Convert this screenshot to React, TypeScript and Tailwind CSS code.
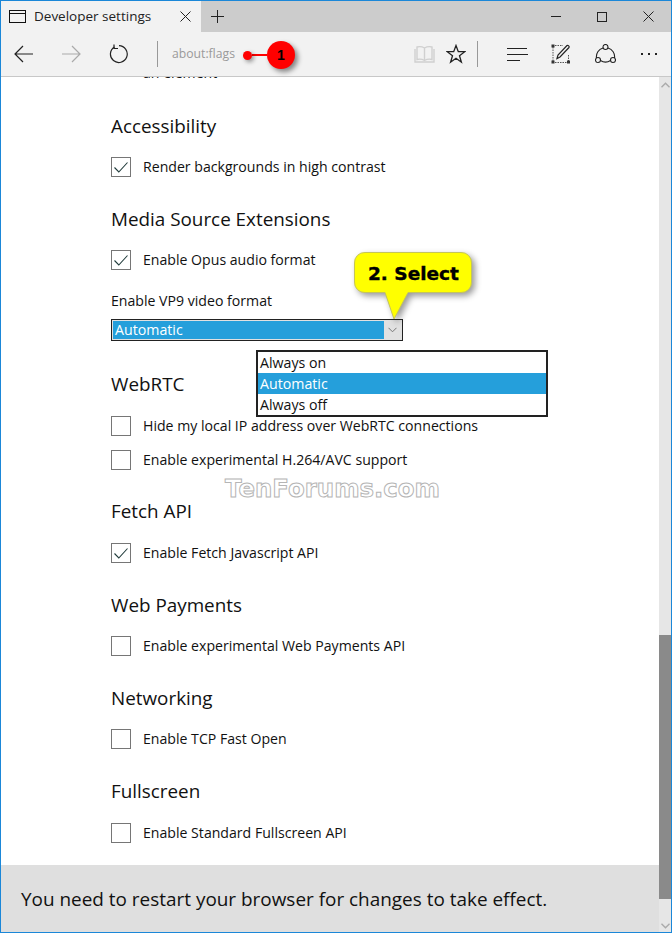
import React from 'react';

const font = "font-['Open_Sans','Noto_Sans',sans-serif]";

// --- toolbar icons ---
const PageIcon = () => (
  <svg width="18" height="14" viewBox="0 0 18 14" fill="none" stroke="#111" strokeWidth="1">
    <rect x="0.5" y="0.5" width="16" height="12" />
    <path d="M0.5 3.5H16.5" />
  </svg>
);

const Close = ({ size = 11, color = '#222' }: { size?: number; color?: string }) => (
  <svg width={size} height={size} viewBox="0 0 11 11" fill="none" stroke={color} strokeWidth="1">
    <path d="M0.5 0.5L10.5 10.5M10.5 0.5L0.5 10.5" />
  </svg>
);

const Arrow = ({ color, flip }: { color: string; flip?: boolean }) => (
  <svg width="19" height="18" viewBox="0 0 19 18" fill="none" stroke={color} strokeWidth="1.2" className={flip ? 'rotate-180' : ''}>
    <path d="M1 9H19M9 1L1 9L9 17" />
  </svg>
);

const Refresh = () => (
  <svg width="20" height="20" viewBox="0 0 20 20" fill="none" stroke="#222" strokeWidth="1.2">
    <path d="M6.5 2.9A8.4 8.4 0 1 0 11 1.7" />
    <path d="M6 0.5V4.5H10" />
  </svg>
);

const Book = () => (
  <svg width="21" height="18" viewBox="0 0 21 18" fill="none" stroke="#d0d0d0" strokeWidth="1.4">
    <path d="M10.5 3C8 1.500 5 1.500 3 2V14.500C5 14 8 14 10.500 15.500C13 14 16 14 18 14.500V2C16 1.500 13 1.500 10.500 3ZM10.500 3V15.500" />
    <path d="M1 4V17H20V4" />
  </svg>
);

const Star = () => (
  <svg width="20" height="20" viewBox="0 0 20 20" fill="none" stroke="#222" strokeWidth="1.3">
    <path d="M10 1.500L12.300 7.700H18.800L13.500 11.700L15.400 18.200L10 14.300L4.600 18.200L6.500 11.700L1.200 7.700H7.700Z" />
  </svg>
);

const Hub = () => (
  <svg width="21" height="15" viewBox="0 0 21 15" fill="none" stroke="#222" strokeWidth="1.2">
    <path d="M0 1.500H20M0 7.500H21M0 13.500H13" />
  </svg>
);

const Note = () => (
  <svg width="20" height="20" viewBox="0 0 20 20" fill="none">
    <path d="M2 3V17M4 18.500H16M4 1.500H12" stroke="#555" strokeWidth="1" strokeDasharray="1.500 1" />
    <path d="M17.500 11V17" stroke="#555" strokeWidth="1" strokeDasharray="1.500 1" />
    <rect x="0.500" y="0.500" width="3" height="3" fill="#333" />
    <rect x="0.500" y="16.500" width="3" height="3" fill="#333" />
    <rect x="16" y="16.500" width="3" height="3" fill="#333" />
    <path d="M6 14.500L7 11L16 1.500C17 0.800 18.800 2.500 18 3.500L9 13Z" stroke="#222" strokeWidth="1.200" />
  </svg>
);

const Share = () => (
  <svg width="21" height="20" viewBox="0 0 21 20" fill="none" stroke="#222" strokeWidth="1.100">
    <circle cx="10.500" cy="3" r="2.500" />
    <circle cx="3" cy="16" r="2.500" />
    <circle cx="18" cy="16" r="2.500" />
    <path d="M8 4A9 9 0 0 0 1.500 14M13 4A9 9 0 0 1 19.500 14M5.500 16.500A9 9 0 0 0 15.500 16.500" />
  </svg>
);

const Check = () => (
  <svg width="14" height="11" viewBox="0 0 14 11" fill="none" stroke="#1f3a3a" strokeWidth="1.100">
    <path d="M0.500 5.500L4.800 10L13.500 0.500" />
  </svg>
);

const Chevron = ({ color, up, thin }: { color: string; up?: boolean; thin?: boolean }) => (
  <svg width="9" height="6" viewBox="0 0 9 6" fill="none" stroke={color} strokeWidth={thin ? 1 : 1.4} className={up ? 'rotate-180' : ''}>
    <path d="M0.500 0.800L4.500 4.800L8.500 0.800" />
  </svg>
);

// --- content helpers ---
const Heading: React.FC<{ className?: string; children: React.ReactNode }> = ({ className = '', children }) => (
  <h2 className={`h-[40px] flex items-center text-[18.850px] text-[#111] font-normal ${className}`}>{children}</h2>
);

const CheckRow: React.FC<{ label: string; checked?: boolean; className?: string }> = ({ label, checked, className = '' }) => (
  <div className={`h-[34px] flex items-center ${className}`}>
    <div className="w-[20px] h-[20px] border border-[#767676] flex items-center justify-center shrink-0">
      {checked && <Check />}
    </div>
    <span className="ml-[12px] text-[14.120px] text-[#111]">{label}</span>
  </div>
);

export default function App() {
  return (
    <div className={`relative w-[672px] h-[933px] border border-[#1b87d8] flex flex-col bg-white overflow-hidden ${font}`}>
      {/* タブバー */}
      <div className="h-[31px] flex bg-[#cccccc] shrink-0">
        <div className="w-[200px] bg-[#f2f2f2] flex items-center pl-[8px] pr-[10px]">
          <PageIcon />
          <span className="ml-[7px] text-[13.500px] text-[#222]">Developer settings</span>
          <span className="ml-auto"><Close /></span>
        </div>
        <div className="w-[32px] flex items-center justify-center text-[#222]">
          <svg width="13" height="13" viewBox="0 0 13 13" stroke="#222" strokeWidth="1"><path d="M6.500 0V13M0 6.500H13" /></svg>
        </div>
        <div className="ml-auto flex items-center pr-[17px] gap-[36px]">
          <div className="w-[10px] h-px bg-[#222]" />
          <div className="w-[10px] h-[10px] border border-[#222]" />
          <Close />
        </div>
      </div>

      {/* ツールバー */}
      <div className="h-[45px] flex items-center bg-[#f2f2f2] border-b border-[#c8c8c8] shrink-0">
        <div className="ml-[13px] flex"><Arrow color="#222" /></div>
        <div className="ml-[29px] flex"><Arrow color="#aaa" flip /></div>
        <div className="ml-[27px] flex"><Refresh /></div>
        <div className="ml-[29px] w-px h-[26px] bg-[#999]" />
        <span className="ml-[14px] text-[12.200px] text-[#9a9a9a]">about:flags</span>
        <div className="ml-[179px] flex"><Book /></div>
        <div className="ml-[11px] flex"><Star /></div>
        <div className="ml-[11px] w-px h-[26px] bg-[#999]" />
        <div className="ml-[29px] flex"><Hub /></div>
        <div className="ml-[23px] flex"><Note /></div>
        <div className="ml-[24px] flex"><Share /></div>
        <div className="ml-[25px] flex gap-[5px]">
          <div className="w-[2px] h-[2px] bg-[#222]" />
          <div className="w-[2px] h-[2px] bg-[#222]" />
          <div className="w-[2px] h-[2px] bg-[#222]" />
        </div>
      </div>

      <div className="flex-1 flex min-h-0">
        <div className="flex-1 flex flex-col min-w-0">
          {/* 設定リスト */}
          <div className="flex-1 overflow-hidden pl-[110px]">
            <div className="-mt-[21px] h-[34px] flex items-center pl-[32px] text-[14.120px] text-[#111]">an element</div>
            <Heading className="mt-[16px]">Accessibility</Heading>
            <CheckRow className="mt-[4px]" label="Render backgrounds in high contrast" checked />
            <Heading className="mt-[15px]">Media Source Extensions</Heading>
            <CheckRow className="mt-[4px]" label="Enable Opus audio format" checked />
            <div className="mt-[12px] h-[24px] flex items-center text-[14.120px] text-[#111]">Enable VP9 video format</div>
            <div className="mt-[6px] w-[292px] h-[22px] border border-[#222] bg-[#e1e1e1] flex p-px">
              <div className="flex-1 bg-[#259fdb] text-white text-[14.200px] leading-[18px] pl-[2px]">Automatic</div>
              <div className="w-[17px] flex items-center justify-center"><Chevron color="#777" thin /></div>
            </div>
            <Heading className="mt-[23px]">WebRTC</Heading>
            <CheckRow className="mt-[5px]" label="Hide my local IP address over WebRTC connections" />
            <CheckRow label="Enable experimental H.264/AVC support" />
            <Heading className="mt-[14px]">Fetch API</Heading>
            <CheckRow className="mt-[5px]" label="Enable Fetch Javascript API" checked />
            <Heading className="mt-[15px]">Web Payments</Heading>
            <CheckRow className="mt-[4px]" label="Enable experimental Web Payments API" />
            <Heading className="mt-[15px]">Networking</Heading>
            <CheckRow className="mt-[4px]" label="Enable TCP Fast Open" />
            <Heading className="mt-[15px]">Fullscreen</Heading>
            <CheckRow className="mt-[5px]" label="Enable Standard Fullscreen API" />
          </div>
          {/* 再起動の通知 */}
          <div className="h-[67px] bg-[#dfdfdf] flex items-center pl-[20px] pt-[2px] text-[18.930px] text-[#111] shrink-0">
            You need to restart your browser for changes to take effect.
          </div>
        </div>

        {/* スクロールバー */}
        <div className="w-[12px] bg-[#e6e6e6] flex flex-col items-center shrink-0">
          <div className="h-[12px] flex items-center pt-[4px]"><Chevron color="#aaa" up /></div>
          <div className="mt-[546px] h-[264px] w-full bg-[#8a8a8a]" />
          <div className="mt-auto h-[12px] flex items-center"><Chevron color="#aaa" /></div>
        </div>
      </div>

      {/* 注釈 1 */}
      <div className="absolute left-[242px] top-[40px] flex items-center">
        <div className="w-[9px] h-[9px] rounded-full bg-[#ff0000] drop-shadow-[2px_2px_2px_rgba(0,0,0,0.4)]" />
        <div className="w-[15px] h-[2px] bg-[#ff0000]" />
        <div className="w-[28px] h-[28px] rounded-full bg-[#ff0000] flex items-center justify-center text-black text-[14px] font-bold shadow-[3px_3px_5px_rgba(0,0,0,0.45)] font-['Liberation_Sans',sans-serif]">1</div>
      </div>

      {/* 注釈 2 */}
      <div className="absolute left-[351px] top-[249px] w-[124px] h-[72px]">
        <svg width="124" height="72" viewBox="0 0 124 72" className="drop-shadow-[3px_3px_3px_rgba(0,0,0,0.4)]">
          <path d="M13 2.500H109A10 10 0 0 1 119.500 13V32A10 10 0 0 1 109 42.500H56L42 69L33 42.500H13A10 10 0 0 1 2.500 32V13A10 10 0 0 1 13 2.500Z" fill="#ffff00" stroke="#c4c45a" strokeWidth="1" />
        </svg>
        <div className="absolute left-[16px] top-[11px] text-[18.500px] leading-[25px] font-bold text-black font-['DejaVu_Sans',sans-serif] [-webkit-text-stroke:0.4px_#000] whitespace-nowrap">2. Select</div>
      </div>

      {/* ドロップダウン */}
      <div className="absolute left-[255px] top-[349px] w-[292px] h-[67px] border-2 border-[#222] bg-white text-[14.200px] leading-[21px] text-[#111]">
        <div className="pl-[2px]">Always on</div>
        <div className="pl-[2px] bg-[#259fdb] text-white">Automatic</div>
        <div className="pl-[2px]">Always off</div>
      </div>

      {/* 透かし */}
      <div className="absolute left-[224px] top-[474px] text-[24.400px] leading-[28px] font-bold text-white [-webkit-text-stroke:1px_#b5b5b5] font-['DejaVu_Sans',sans-serif] whitespace-nowrap">TenForums.com</div>
    </div>
  );
}
